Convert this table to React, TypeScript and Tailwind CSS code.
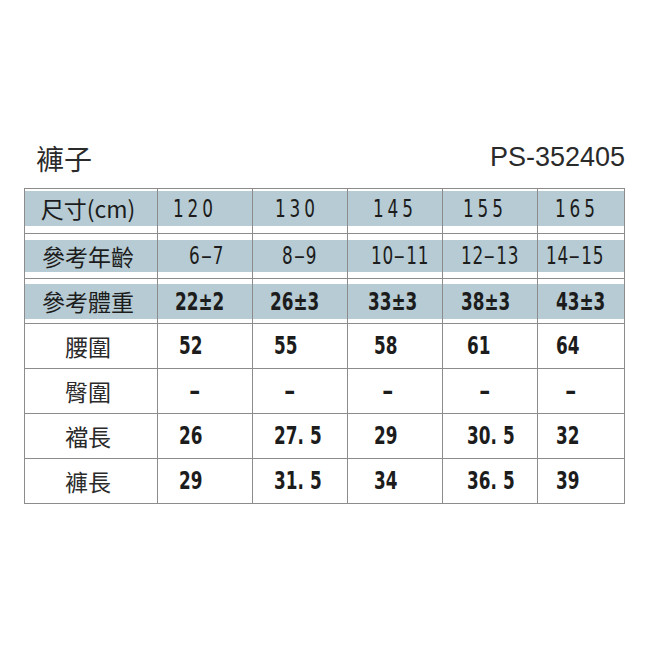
const cjk = "font-['Noto_Sans_CJK_TC','Noto_Sans_CJK_JP',sans-serif]";
const num = "font-['DejaVu_Sans_Condensed','DejaVu_Sans',sans-serif]";

const widths = ["w-[133px]", "w-[95px]", "w-[95px]", "w-[95px]", "w-[95px]", "w-[87px]"];

type Cell = { text: string; pl: string };

type BandRow = { label: string; band: string; weight: string; cells: Cell[] };

const bandRows: BandRow[] = [
  {
    label: "尺寸(cm)",
    band: "mt-[2px] h-[35px]",
    weight: "font-normal tracking-[5px]",
    cells: [
      { text: "120", pl: "pl-[15px]" },
      { text: "130", pl: "pl-[22px]" },
      { text: "145", pl: "pl-[25px]" },
      { text: "155", pl: "pl-[20px]" },
      { text: "165", pl: "pl-[17px]" },
    ],
  },
  {
    label: "參考年齡",
    band: "mt-[6px] h-[32px]",
    weight: "font-normal tracking-[1px]",
    cells: [
      { text: "6–7", pl: "pl-[31px]" },
      { text: "8–9", pl: "pl-[29px]" },
      { text: "10–11", pl: "pl-[23px]" },
      { text: "12–13", pl: "pl-[18px]" },
      { text: "14–15", pl: "pl-[8px]" },
    ],
  },
  {
    label: "參考體重",
    band: "mt-[5px] h-[35px]",
    weight: "font-semibold",
    cells: [
      { text: "22±2", pl: "pl-[17px]" },
      { text: "26±3", pl: "pl-[17px]" },
      { text: "33±3", pl: "pl-[20px]" },
      { text: "38±3", pl: "pl-[18px]" },
      { text: "43±3", pl: "pl-[18px]" },
    ],
  },
];

type DataRow = { label: string; cells: Cell[] };

const dataRows: DataRow[] = [
  {
    label: "腰圍",
    cells: [
      { text: "52", pl: "pl-[21px]" },
      { text: "55", pl: "pl-[21px]" },
      { text: "58", pl: "pl-[26px]" },
      { text: "61", pl: "pl-[24px]" },
      { text: "64", pl: "pl-[18px]" },
    ],
  },
  {
    label: "臀圍",
    cells: [
      { text: "–", pl: "pl-[31px]" },
      { text: "–", pl: "pl-[31px]" },
      { text: "–", pl: "pl-[34px]" },
      { text: "–", pl: "pl-[36px]" },
      { text: "–", pl: "pl-[27px]" },
    ],
  },
  {
    label: "襠長",
    cells: [
      { text: "26", pl: "pl-[21px]" },
      { text: "27.5", pl: "pl-[21px]" },
      { text: "29", pl: "pl-[26px]" },
      { text: "30.5", pl: "pl-[24px]" },
      { text: "32", pl: "pl-[18px]" },
    ],
  },
  {
    label: "褲長",
    cells: [
      { text: "29", pl: "pl-[21px]" },
      { text: "31.5", pl: "pl-[21px]" },
      { text: "34", pl: "pl-[26px]" },
      { text: "36.5", pl: "pl-[24px]" },
      { text: "39", pl: "pl-[18px]" },
    ],
  },
];

// the chart prints a wide full-stop ("27. 5") and long dashes
const Value = ({ text }: { text: string }) => {
  const parts = text.split(/([.–])/);
  return (
    <>
      {parts.map((p, i) => {
        if (p === ".") return <span key={i} className="mr-[8px]">.</span>;
        if (p === "–")
          return (
            <span key={i} className="inline-block mx-[2px] scale-x-[1.3]">
              –
            </span>
          );
        return <span key={i}>{p}</span>;
      })}
    </>
  );
};

// the chart's digits are a narrow gothic face; squeeze DejaVu Condensed to match
const Narrow = ({ children }: { children: React.ReactNode }) => (
  <span className="inline-block whitespace-nowrap scale-x-[0.78] origin-left">{children}</span>
);

const App = () => {
  return (
    <div className="w-[650px] h-[650px] bg-white pt-[144px] text-[#1c1c1c]">
      <div className="ml-[24px] w-[601px] flex justify-between items-start h-[28px]">
        <span className={`${cjk} ml-[12px] text-[28px] leading-none text-[#2a2a2a]`}>褲子</span>
        <span className="font-['Liberation_Sans',sans-serif] text-[27px] leading-none text-[#2a2a2a]">
          PS-352405
        </span>
      </div>

      <div className="ml-[24px] mt-[16px] w-[601px] border-t border-l border-[#8c8c8c]">
        {bandRows.map((row) => (
          <div key={row.label} className="flex h-[45px] border-b border-[#8c8c8c]">
            <div className={`${widths[0]} h-full border-r border-[#8c8c8c]`}>
              <div
                className={`${row.band} bg-[#b6cbd3] flex items-center justify-center pr-[6px] ${cjk} text-[23px] leading-none`}
              >
                {row.label}
              </div>
            </div>
            {row.cells.map((c, i) => (
              <div key={i} className={`${widths[i + 1]} h-full border-r border-[#8c8c8c] overflow-hidden`}>
                <div
                  className={`${row.band} bg-[#b6cbd3] flex items-center ${c.pl} ${num} ${row.weight} text-[24px] leading-none`}
                >
                  <Narrow>
                    <Value text={c.text} />
                  </Narrow>
                </div>
              </div>
            ))}
          </div>
        ))}

        {dataRows.map((row) => (
          <div key={row.label} className="flex h-[45px] border-b border-[#8c8c8c]">
            <div
              className={`${widths[0]} h-full border-r border-[#8c8c8c] flex items-center justify-center pr-[6px] ${cjk} text-[23px] leading-none text-[#2a2a2a]`}
            >
              {row.label}
            </div>
            {row.cells.map((c, i) => (
              <div
                key={i}
                className={`${widths[i + 1]} h-full border-r border-[#8c8c8c] flex items-center ${c.pl} ${num} font-bold text-[24px] leading-none`}
              >
                <Narrow>
                  <Value text={c.text} />
                </Narrow>
              </div>
            ))}
          </div>
        ))}
      </div>
    </div>
  );
};

export default App;
